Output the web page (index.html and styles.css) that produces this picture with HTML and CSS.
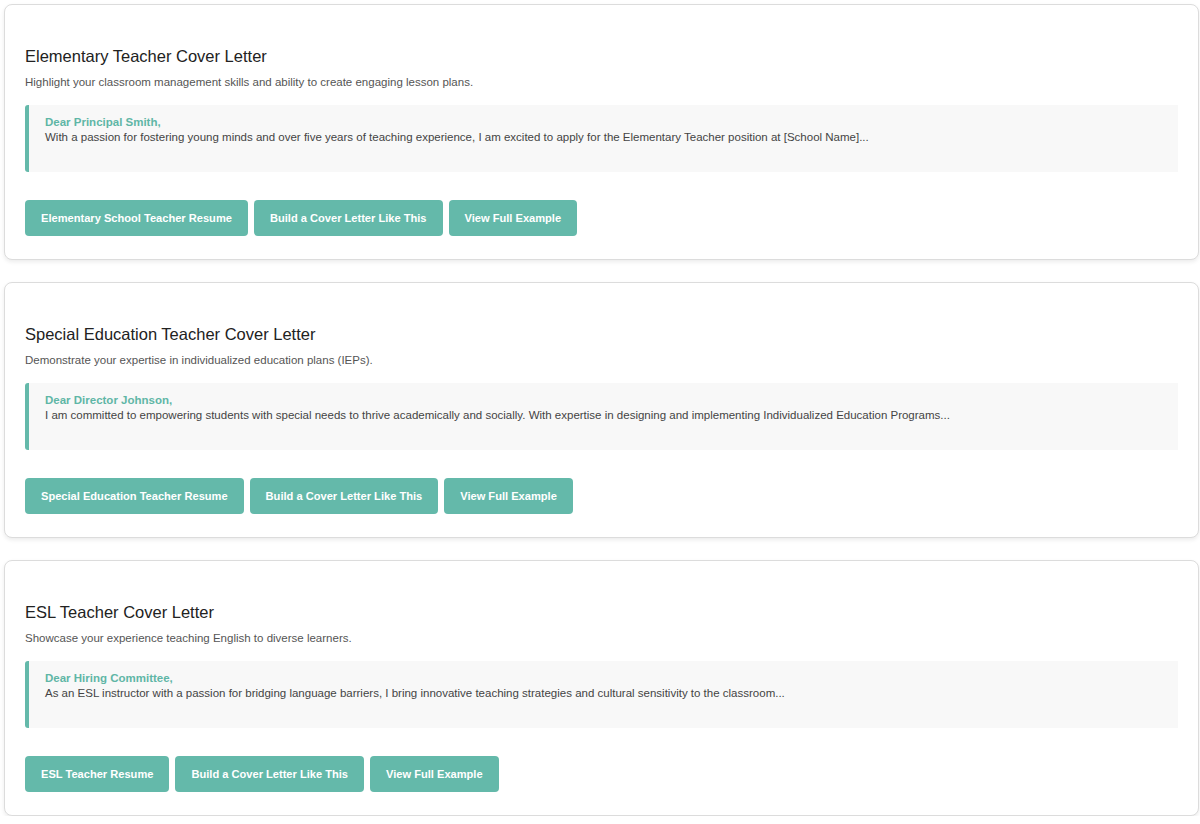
FILE: index.html
```html
<!DOCTYPE html>
<html lang="en">
<head>
  <meta charset="UTF-8" />
  <title>Teacher Cover Letter Examples</title>
  <meta name="viewport" content="width=device-width, initial-scale=1.0" />
  <link rel="stylesheet" href="styles.css">
</head>
<body>
  <div class="examples">

    <!-- Elementary -->
    <div class="example-card">
      <h3>Elementary Teacher Cover Letter</h3>
      <p class="desc">Highlight your classroom management skills and ability to create engaging lesson plans.</p>
      <div class="letter">
        <span class="greeting">Dear Principal Smith,</span>
        <span class="body">With a passion for fostering young minds and over five years of teaching experience, I am excited to apply for the Elementary Teacher position at [School Name]...</span>
      </div>
      <div class="actions">
        <a class="btn" href="#">Elementary School Teacher Resume</a>
        <a class="btn" href="#">Build a Cover Letter Like This</a>
        <a class="btn" href="#">View Full Example</a>
      </div>
    </div>

    <!-- Special education -->
    <div class="example-card">
      <h3>Special Education Teacher Cover Letter</h3>
      <p class="desc">Demonstrate your expertise in individualized education plans (IEPs).</p>
      <div class="letter">
        <span class="greeting">Dear Director Johnson,</span>
        <span class="body">I am committed to empowering students with special needs to thrive academically and socially. With expertise in designing and implementing Individualized Education Programs...</span>
      </div>
      <div class="actions">
        <a class="btn" href="#">Special Education Teacher Resume</a>
        <a class="btn" href="#">Build a Cover Letter Like This</a>
        <a class="btn" href="#">View Full Example</a>
      </div>
    </div>

    <!-- ESL -->
    <div class="example-card">
      <h3>ESL Teacher Cover Letter</h3>
      <p class="desc">Showcase your experience teaching English to diverse learners.</p>
      <div class="letter">
        <span class="greeting">Dear Hiring Committee,</span>
        <span class="body">As an ESL instructor with a passion for bridging language barriers, I bring innovative teaching strategies and cultural sensitivity to the classroom...</span>
      </div>
      <div class="actions">
        <a class="btn" href="#">ESL Teacher Resume</a>
        <a class="btn" href="#">Build a Cover Letter Like This</a>
        <a class="btn" href="#">View Full Example</a>
      </div>
    </div>

  </div>
</body>
</html>
```

FILE: styles.css
```css
* { box-sizing: border-box; margin: 0; padding: 0; }
html, body {
  background: #fff; font-family: "Liberation Sans", Arial, sans-serif; color: #333;
}

/* Список примеров */
.examples {
  display: flex; flex-direction: column; gap: 22px;
  padding: 4px 1px 0 4px;
}

.example-card {
  height: 256px; padding: 40px 20px 23px 20px;
  border: 1px solid #dcdcdc; border-radius: 8px;
  box-shadow: 0 2px 4px rgba(0, 0, 0, 0.08);
  background: #fff;
}
.example-card h3 {
  font-size: 16.5px; font-weight: 400; line-height: 22px; color: #222;
}
.example-card .desc {
  margin-top: 7px; font-size: 11.5px; line-height: 16px; color: #555;
}

/* Цитата письма */
.letter {
  margin-top: 15px; height: 67px; padding: 10px 16px;
  background: #f8f8f8; border-left: 4px solid #64b9aa; border-radius: 3px 0 0 3px;
  font-size: 11.5px; line-height: 15px;
}
.letter span { display: block; }
.letter .greeting { font-weight: 700; color: #5fb6a6; }
.letter .body { color: #444; }

/* Кнопки */
.actions { display: flex; gap: 6px; margin-top: 28px; }
.btn {
  display: inline-flex; align-items: center; height: 36px; padding: 0 16px;
  background: #64b9aa; color: #fff; border-radius: 4px;
  font-size: 11.1px; font-weight: 700; text-decoration: none;
}
```
